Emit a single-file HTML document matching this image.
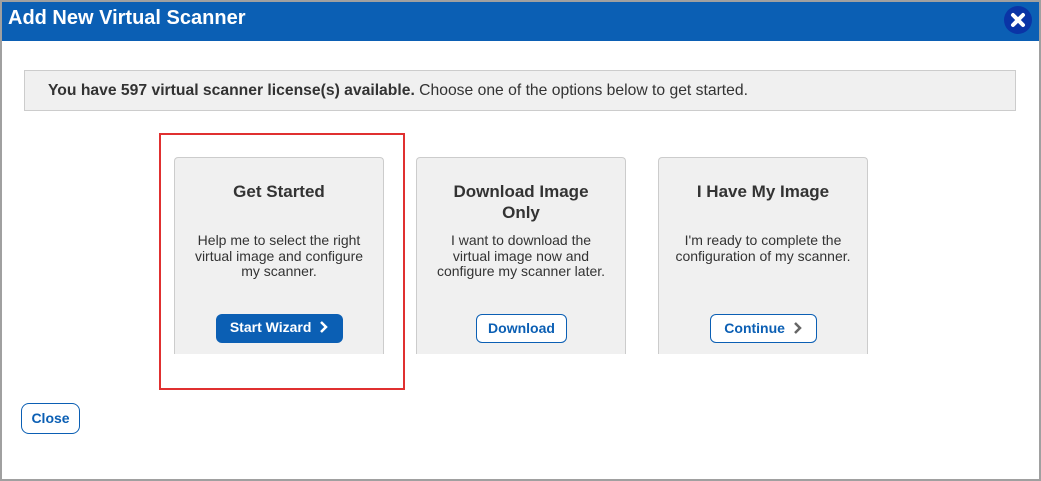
<!DOCTYPE html><html><head><style>
body{margin:0;width:1041px;height:481px;overflow:hidden;font-family:"Liberation Sans",Arial,sans-serif;background:#fff}
.frame{position:absolute;left:0;top:0;width:1037px;height:477px;border:2px solid #a0a0a0}
.hdr{position:absolute;left:2px;top:2px;width:1037px;height:39px;background:#0b5fb4;color:#fff;font-weight:bold;font-size:20px}
.hdr span{position:absolute;left:6px;top:5px}
.x{position:absolute;left:1004px;top:6px;width:28px;height:28px;border-radius:50%;background:#0a34a6}
.info{position:absolute;left:24px;top:70px;width:992px;height:41px;background:#f0f0f0;border:1px solid #ccc;font-size:15.7px;color:#333;line-height:39px;box-sizing:border-box;padding-left:23px}
.card{position:absolute;top:157px;width:210px;height:197px;background:#f0f0f0;border:1px solid #ccc;border-bottom:none;border-radius:4px 4px 0 0;box-sizing:border-box;text-align:center;color:#333}
.card h3{margin:0;position:absolute;top:23px;left:0;right:0;font-size:17px;line-height:21px}
.card p{margin:0;position:absolute;left:16px;right:16px;font-size:14px;line-height:15.5px}
.btn{position:absolute;top:156px;height:29px;box-sizing:border-box;border-radius:6px;font-weight:bold;font-size:14px;line-height:27px}
.red{position:absolute;left:159px;top:133px;width:246px;height:257px;border:2px solid #e03030;box-sizing:border-box}
.close{position:absolute;left:21px;top:403px;width:59px;height:31px;border:1px solid #0b5fb4;border-radius:8px;box-sizing:border-box;color:#0b5fb4;font-weight:bold;font-size:14px;text-align:center;line-height:29px}
</style></head><body>
<div class="frame"></div>
<div class="hdr"><span>Add New Virtual Scanner</span></div>
<div class="x"><svg width="28" height="28"><path d="M9 9L19 19M19 9L9 19" stroke="#fff" stroke-width="4" stroke-linecap="round"/></svg></div>
<div class="info"><b>You have 597 virtual scanner license(s) available.</b> Choose one of the options below to get started.</div>
<div class="red"></div>
<div class="card" style="left:174px"><h3>Get Started</h3><p style="top:75px">Help me to select the right virtual image and configure my scanner.</p>
<div class="btn" style="left:41px;width:127px;background:#0b5fb4;color:#fff;">Start Wizard&nbsp;&nbsp;<svg width="10" height="12" style="vertical-align:-1px"><path d="M2 1L7 6L2 11" stroke="#fff" stroke-width="2.5" fill="none"/></svg></div></div>
<div class="card" style="left:416px"><h3>Download Image<br>Only</h3><p style="top:75px;left:19px;right:19px">I want to download the virtual image now and configure my scanner later.</p>
<div class="btn" style="left:59px;width:91px;background:#fff;border:1px solid #0b5fb4;color:#0b5fb4">Download</div></div>
<div class="card" style="left:658px"><h3>I Have My Image</h3><p style="top:75px;left:10px;right:10px">I'm ready to complete the configuration of my scanner.</p>
<div class="btn" style="left:51px;width:107px;background:#fff;border:1px solid #0b5fb4;color:#0b5fb4">Continue&nbsp;&nbsp;<svg width="10" height="12" style="vertical-align:-1px"><path d="M2 1L7 6L2 11" stroke="#666" stroke-width="2.5" fill="none"/></svg></div></div>
<div class="close">Close</div>
</body></html>
